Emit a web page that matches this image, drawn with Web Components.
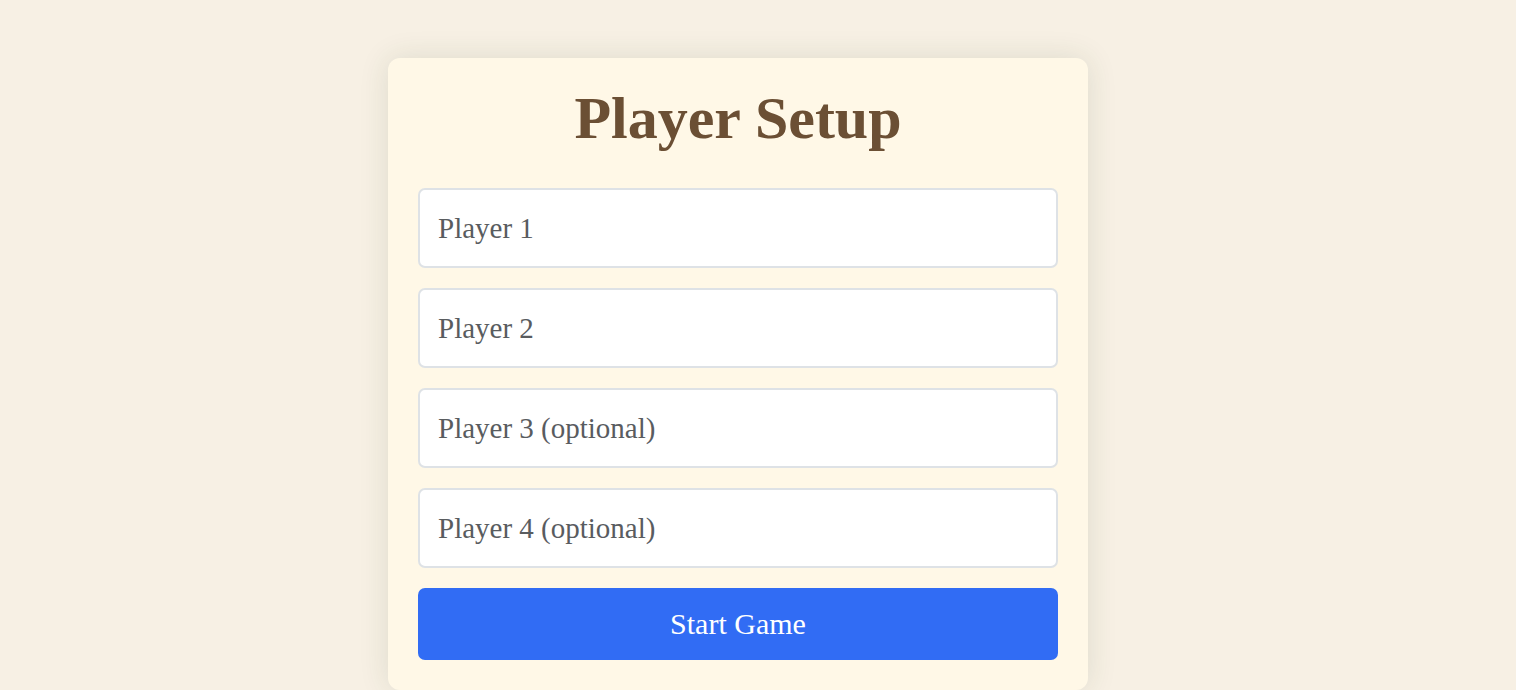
<!DOCTYPE html>
<html lang="en">
<head>
<meta charset="utf-8">
<meta name="viewport" content="width=device-width, initial-scale=1">
<title>Player Setup</title>
<style>
html { background: #f7f0e4; }
body { margin: 0; font-family: Georgia, "Liberation Serif", serif; }
</style>
</head>
<body>
<setup-page>
  <setup-card heading="Player Setup">
    <player-field label="Player 1"></player-field>
    <player-field label="Player 2"></player-field>
    <player-field label="Player 3 (optional)"></player-field>
    <player-field label="Player 4 (optional)"></player-field>
    <start-button>Start Game</start-button>
  </setup-card>
</setup-page>
<script>
class SetupPage extends HTMLElement {
  constructor() {
    super();
    this.attachShadow({ mode: "open" }).innerHTML = `
      <style>
        :host { display: block; }
        main { display: flex; justify-content: center; padding: 58px 40px 0 0; }
      </style>
      <main><slot></slot></main>`;
  }
}
class SetupCard extends HTMLElement {
  constructor() {
    super();
    this.attachShadow({ mode: "open" }).innerHTML = `
      <style>
        :host { display: block; box-sizing: border-box; width: 100%; max-width: 700px;
          padding: 30px; border-radius: 12px; background: #fff8e7;
          box-shadow: 0 0 30px rgba(40, 70, 30, 0.12); }
        h1 { margin: 0 0 40px; text-align: center; color: #6b4f34;
          font-size: 60px; line-height: 60px; font-weight: 700; }
        form { display: flex; flex-direction: column; gap: 20px; }
      </style>
      <h1></h1>
      <form><slot></slot></form>`;
  }
  connectedCallback() {
    this.shadowRoot.querySelector("h1").textContent = this.getAttribute("heading");
  }
}
class PlayerField extends HTMLElement {
  constructor() {
    super();
    this.attachShadow({ mode: "open" }).innerHTML = `
      <style>
        :host { display: block; }
        input { display: block; box-sizing: border-box; width: 100%; height: 80px;
          padding: 0 18px; border: 2px solid #dee2e6; border-radius: 7px;
          background: #fff; color: #212529; font: inherit; font-size: 29px; }
        input::placeholder { color: #595c5f; opacity: 1; }
      </style>
      <input type="text">`;
  }
  connectedCallback() {
    const input = this.shadowRoot.querySelector("input");
    input.placeholder = this.getAttribute("label");
    input.setAttribute("aria-label", this.getAttribute("label"));
  }
}
class StartButton extends HTMLElement {
  constructor() {
    super();
    this.attachShadow({ mode: "open" }).innerHTML = `
      <style>
        :host { display: block; }
        button { display: block; width: 100%; height: 72px; padding: 0; border: 0;
          border-radius: 7px; background: #316cf4; color: #fff; cursor: pointer;
          font: inherit; font-size: 30px; }
      </style>
      <button type="button"><slot></slot></button>`;
  }
}
customElements.define("setup-page", SetupPage);
customElements.define("setup-card", SetupCard);
customElements.define("player-field", PlayerField);
customElements.define("start-button", StartButton);
</script>
</body>
</html>
